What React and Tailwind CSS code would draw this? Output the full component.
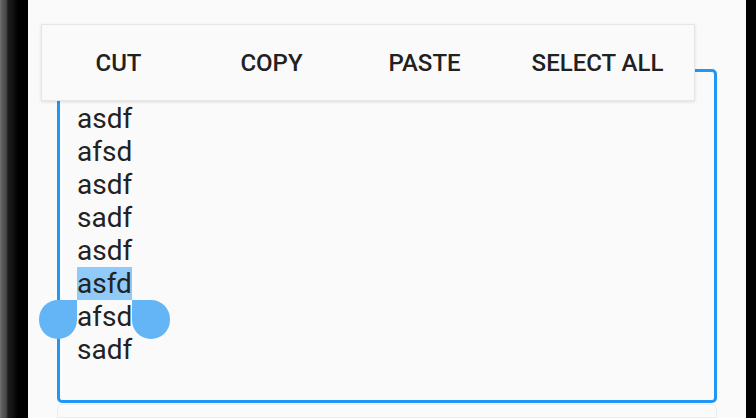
export default function App() {
  const lines = ["asdf", "afsd", "asdf", "sadf", "asdf", "asfd", "afsd", "sadf"];
  return (
    <div className="flex h-[418px] w-[756px] overflow-hidden bg-[#fafafa]" style={{ fontFamily: "Roboto, 'Noto Sans', sans-serif" }}>
      <div className="h-full w-[28px] shrink-0 bg-[linear-gradient(to_right,#707070_0px,#555555_3px,#4a4a4a_6px,#1e1e1e_8px,#111111_13px,#000000_18px)]" />
      <div className="relative flex-1 flex flex-col">
        <div className="mx-[29px] mt-[69px] h-[334px] shrink-0 rounded-[5px] border-[3px] border-[#2196f3] pl-[17px] pt-[30px] text-[28px] leading-[33px] text-[#222222]">
          {lines.map((l, i) =>
            i === 5 ? (
              <div key={i}>
                <span className="relative bg-[#90caf9]">
                  {l}
                  <span className="absolute left-[-38px] top-full h-[39px] w-[38px] rounded-full rounded-tr-none bg-[#64b5f6]" />
                  <span className="absolute right-[-38px] top-full h-[39px] w-[38px] rounded-full rounded-tl-none bg-[#64b5f6]" />
                </span>
              </div>
            ) : (
              <div key={i}>{l}</div>
            )
          )}
        </div>
        <div className="mx-[29px] mt-[1px] flex-1 rounded-t-[5px] border border-[#ececec] bg-[#fafafa]" />
        <div className="absolute left-[13px] top-[24px] flex h-[77px] w-[654px] items-center border border-[#e6e6e6] bg-[#fafafa] text-[24px] font-medium text-[#212121] shadow-[0_1px_3px_rgba(0,0,0,0.12)]">
          <div className="flex w-[153px] justify-center">CUT</div>
          <div className="flex w-[153px] justify-center">COPY</div>
          <div className="flex w-[153px] justify-center">PASTE</div>
          <div className="flex flex-1 justify-center">SELECT ALL</div>
        </div>
      </div>
      <div className="h-full w-[10px] shrink-0 bg-black" />
    </div>
  );
}
